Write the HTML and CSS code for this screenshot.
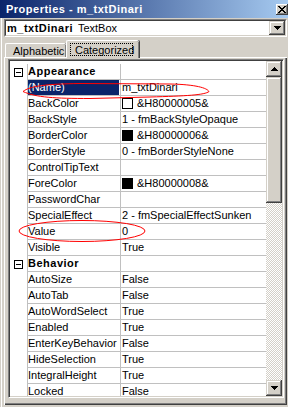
FILE: index.html
```html
<!DOCTYPE html>
<html lang="en">

<head>
    <meta charset="UTF-8">
    <meta name="viewport" content="width=device-width, initial-scale=1.0">
    <title>Properties - m_txtDinari</title>
    <link rel="stylesheet" href="styles.css">
</head>

<body>
    <div class="window">
        <div class="titlebar">
            <span class="title">Properties - m_txtDinari</span>
            <span class="close-btn">
                <svg width="8" height="7" viewBox="0 0 8 7" shape-rendering="crispEdges">
                    <path d="M0 0h2v1h-2zM6 0h2v1h-2zM1 1h2v1h-2zM5 1h2v1h-2zM2 2h4v1h-4zM3 3h2v1h-2zM2 4h4v1h-4zM1 5h2v1h-2zM5 5h2v1h-2zM0 6h2v1h-2zM6 6h2v1h-2z" fill="#000" />
                </svg>
            </span>
        </div>
        <div class="frame">
            <div class="combo">
                <div class="combo-inner">
                    <div class="combo-text"><b>m_txtDinari</b> TextBox</div>
                    <div class="button combo-btn">
                        <svg width="7" height="4" viewBox="0 0 7 4" shape-rendering="crispEdges">
                            <path d="M0 0h7v1h-7zM1 1h5v1h-5zM2 2h3v1h-3zM3 3h1v1h-1z" fill="#000" />
                        </svg>
                    </div>
                </div>
            </div>

            <div class="tabs">
                <div class="tab">Alphabetic</div>
                <div class="tab active"><span class="focus">Categorized</span></div>
            </div>

            <div class="panel">
                <div class="grid">
                    <div class="rows">
                        <div class="row category">
                            <div class="gutter"><span class="toggle"></span></div>
                            <div class="name">Appearance</div>
                            <div class="value"></div>
                        </div>
                        <div class="row selected">
                            <div class="gutter"></div>
                            <div class="name"><span>(Name)</span></div>
                            <div class="value">m_txtDinari</div>
                        </div>
                        <div class="row">
                            <div class="gutter"></div>
                            <div class="name">BackColor</div>
                            <div class="value"><span class="swatch white"></span>&amp;H80000005&amp;</div>
                        </div>
                        <div class="row">
                            <div class="gutter"></div>
                            <div class="name">BackStyle</div>
                            <div class="value">1 - fmBackStyleOpaque</div>
                        </div>
                        <div class="row">
                            <div class="gutter"></div>
                            <div class="name">BorderColor</div>
                            <div class="value"><span class="swatch"></span>&amp;H80000006&amp;</div>
                        </div>
                        <div class="row">
                            <div class="gutter"></div>
                            <div class="name">BorderStyle</div>
                            <div class="value">0 - fmBorderStyleNone</div>
                        </div>
                        <div class="row">
                            <div class="gutter"></div>
                            <div class="name">ControlTipText</div>
                            <div class="value"></div>
                        </div>
                        <div class="row">
                            <div class="gutter"></div>
                            <div class="name">ForeColor</div>
                            <div class="value"><span class="swatch"></span>&amp;H80000008&amp;</div>
                        </div>
                        <div class="row">
                            <div class="gutter"></div>
                            <div class="name">PasswordChar</div>
                            <div class="value"></div>
                        </div>
                        <div class="row">
                            <div class="gutter"></div>
                            <div class="name">SpecialEffect</div>
                            <div class="value">2 - fmSpecialEffectSunken</div>
                        </div>
                        <div class="row">
                            <div class="gutter"></div>
                            <div class="name">Value</div>
                            <div class="value">0</div>
                        </div>
                        <div class="row">
                            <div class="gutter"></div>
                            <div class="name">Visible</div>
                            <div class="value">True</div>
                        </div>
                        <div class="row category">
                            <div class="gutter"><span class="toggle"></span></div>
                            <div class="name">Behavior</div>
                            <div class="value"></div>
                        </div>
                        <div class="row">
                            <div class="gutter"></div>
                            <div class="name">AutoSize</div>
                            <div class="value">False</div>
                        </div>
                        <div class="row">
                            <div class="gutter"></div>
                            <div class="name">AutoTab</div>
                            <div class="value">False</div>
                        </div>
                        <div class="row">
                            <div class="gutter"></div>
                            <div class="name">AutoWordSelect</div>
                            <div class="value">True</div>
                        </div>
                        <div class="row">
                            <div class="gutter"></div>
                            <div class="name">Enabled</div>
                            <div class="value">True</div>
                        </div>
                        <div class="row">
                            <div class="gutter"></div>
                            <div class="name">EnterKeyBehavior</div>
                            <div class="value">False</div>
                        </div>
                        <div class="row">
                            <div class="gutter"></div>
                            <div class="name">HideSelection</div>
                            <div class="value">True</div>
                        </div>
                        <div class="row">
                            <div class="gutter"></div>
                            <div class="name">IntegralHeight</div>
                            <div class="value">True</div>
                        </div>
                        <div class="row">
                            <div class="gutter"></div>
                            <div class="name">Locked</div>
                            <div class="value">False</div>
                        </div>
                    </div>

                    <div class="scrollbar">
                        <div class="button scroll-btn">
                            <svg width="7" height="4" viewBox="0 0 7 4" shape-rendering="crispEdges">
                                <path d="M3 0h1v1h-1zM2 1h3v1h-3zM1 2h5v1h-5zM0 3h7v1h-7z" fill="#000" />
                            </svg>
                        </div>
                        <div class="button thumb"></div>
                        <div class="track"></div>
                        <div class="button scroll-btn">
                            <svg width="7" height="4" viewBox="0 0 7 4" shape-rendering="crispEdges">
                                <path d="M0 0h7v1h-7zM1 1h5v1h-5zM2 2h3v1h-3zM3 3h1v1h-1z" fill="#000" />
                            </svg>
                        </div>
                    </div>
                </div>
            </div>
        </div>

        <!-- red marks drawn over the screenshot -->
        <svg class="marks" width="288" height="407" viewBox="0 0 288 407">
            <path d="M23 91.5C30 86 46 84 80 83.5L170 84C196 84.5 207 88 209 91.5C205 95 186 96 150 97L90 98.5C55 98.5 36 97.5 23 91.5Z" fill="none" stroke="#f00" stroke-width="1" />
            <ellipse cx="82" cy="231" rx="63" ry="10.5" fill="none" stroke="#f00" stroke-width="1" />
        </svg>
    </div>
</body>

</html>
```

FILE: styles.css
```css
html,
body {
    margin: 0;
    padding: 0;
    background-color: #d4d0c8;
}

body {
    font-family: "Liberation Sans", Arial, sans-serif;
    font-size: 11px;
    color: black;
}

.window {
    position: relative;
    width: 288px;
    height: 407px;
    background-color: #d4d0c8;
    overflow: hidden;
}

.titlebar {
    height: 18px;
    display: flex;
    align-items: center;
    justify-content: space-between;
    padding-left: 6px;
    background: linear-gradient(to right, #0a246a, #a6caf0);
    color: white;
    font-weight: bold;
    letter-spacing: 0.5px;
}

.close-btn {
    width: 12px;
    height: 11px;
    display: flex;
    justify-content: center;
    align-items: center;
    background-color: #d4d0c8;
    box-shadow: inset -1px -1px #404040, inset 1px 1px #fff, inset -2px -2px #808080;
}

.frame {
    padding: 1px 1px 0 4px;
    box-shadow: inset 1px 0 #d4d0c8, inset 2px 0 #fff;
    height: 389px;
}

/* object combo box */
.combo {
    height: 16px;
    border: 1px solid;
    border-color: #808080 #fff #fff #808080;
}

.combo-inner {
    height: 14px;
    display: flex;
    border: 1px solid;
    border-color: #404040 #d4d0c8 #d4d0c8 #404040;
    background-color: white;
}

.combo-text {
    flex: 1;
    line-height: 14px;
    padding-left: 1px;
}

.combo-text b {
    letter-spacing: 0.5px;
    margin-right: 2px;
}

.button {
    background-color: #d4d0c8;
    box-shadow: inset -1px -1px #404040, inset 1px 1px #d4d0c8, inset -2px -2px #808080, inset 2px 2px #fff;
    display: flex;
    justify-content: center;
    align-items: center;
}

.combo-btn {
    width: 16px;
    height: 14px;
}

/* tabs */
.tabs {
    display: flex;
    align-items: flex-end;
    height: 18px;
    margin-top: 2px;
    padding-left: 1px;
    position: relative;
    z-index: 1;
}

.tab {
    width: 61px;
    height: 14px;
    line-height: 14px;
    box-sizing: border-box;
    padding-left: 7px;
    border-top: 1px solid #fff;
    border-left: 1px solid #fff;
    border-top-left-radius: 2px;
    border-top-right-radius: 2px;
    box-shadow: inset -1px 0 #808080, 1px 0 #404040;
}

.tab.active {
    width: 73px;
    height: 18px;
    margin-bottom: -1px;
    padding: 2px 0 0 3px;
    background-color: #d4d0c8;
}

.tab .focus {
    display: block;
    width: 63px;
    height: 13px;
    line-height: 13px;
    padding-left: 4px;
    box-sizing: border-box;
    border: 1px dotted #000;
}

/* tab page */
.panel {
    height: 346px;
    border-top: 1px solid #fff;
    border-left: 1px solid #fff;
    box-shadow: inset -1px -1px #404040, inset -2px -2px #808080;
    padding: 1px 2px 0 3px;
}

.grid {
    width: 272px;
    height: 335px;
    border: 1px solid;
    border-color: #808080 #fff #fff #808080;
    box-shadow: inset 1px 1px #404040, inset -1px -1px #d4d0c8;
    padding: 1px;
    display: flex;
    background-color: white;
}

.rows {
    flex: 1;
    padding-top: 3px;
    overflow: hidden;
}

.row {
    display: flex;
    height: 16px;
}

.gutter {
    width: 17px;
    display: flex;
    align-items: center;
    justify-content: center;
}

.name,
.value {
    height: 15px;
    line-height: 15px;
    border-left: 1px solid #c0c0c0;
    border-bottom: 1px solid #c0c0c0;
    white-space: nowrap;
    overflow: hidden;
}

.name {
    width: 92px;
}

.value {
    width: 144px;
    padding-left: 1px;
    display: flex;
    align-items: center;
}

.category .name {
    font-weight: bold;
    letter-spacing: 0.5px;
}

.toggle {
    width: 7px;
    height: 7px;
    border: 1px solid #000;
    position: relative;
}

.toggle::after {
    content: "";
    position: absolute;
    left: 1px;
    top: 3px;
    width: 5px;
    height: 1px;
    background-color: #000;
}

.selected .name span {
    display: block;
    margin-right: 1px;
    background-color: #0a246a;
    color: white;
}

.swatch {
    width: 9px;
    height: 9px;
    border: 1px solid #000;
    background-color: #000;
    margin-right: 4px;
}

.swatch.white {
    background-color: white;
}

/* vertical scroll bar */
.scrollbar {
    width: 16px;
    display: flex;
    flex-direction: column;
}

.scroll-btn {
    height: 16px;
}

.thumb {
    height: 126px;
}

.track {
    flex: 1;
    background: repeating-conic-gradient(#fff 0 25%, #d4d0c8 0 50%) 0 0 / 2px 2px;
}

.marks {
    position: absolute;
    left: 0;
    top: 0;
    pointer-events: none;
}
```
